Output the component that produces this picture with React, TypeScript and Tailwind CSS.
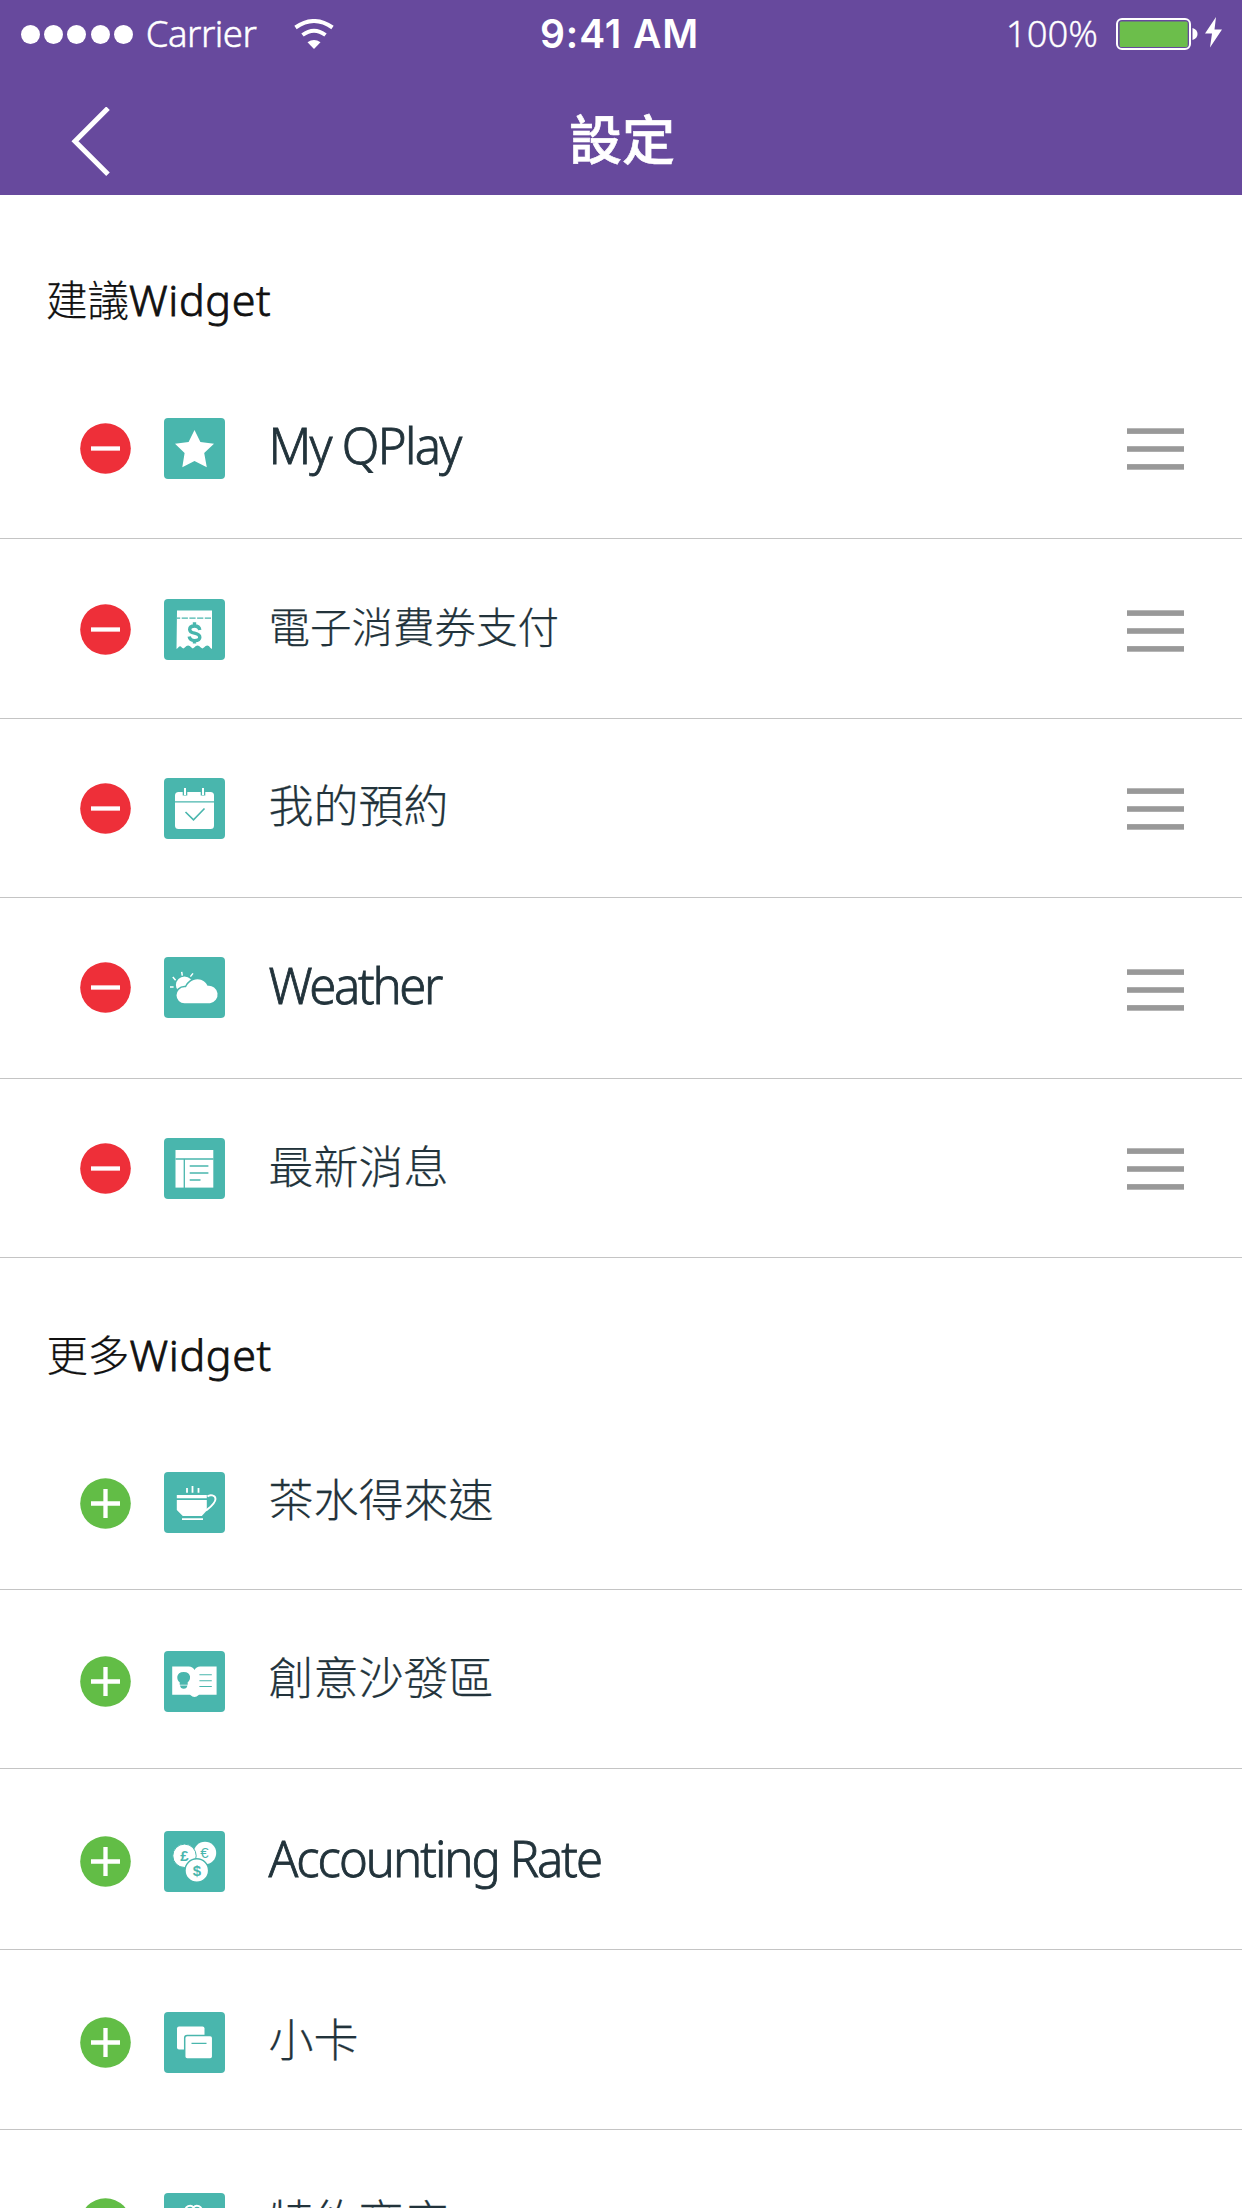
import React from "react";

const TEAL = "#49b6ad";

const icons: Record<string, React.ReactNode> = {
  star: (
    <path fill="#fff" d="M30.500 12l5.900 12 13.600 1.700-9.800 9.300 2.600 14.200-12.300-6.300-12.200 6.300 2.300-14.200-9.600-9.300 13.600-1.700z" />
  ),
  voucher: (
    <>
      <path fill="#fff" d="M13 11.500h35v38.500l-1.500-1q-3-4.500-6.500-.5l-1.600 1-1.600-1q-3.300-4-6.600 0l-1.400 1-1.400-1q-3.300-4-6.600 0l-1.500 1-1.500-1q-2-2.500-4 .5l-1.300 1z" />
      <path stroke={TEAL} strokeWidth="1.300" strokeDasharray="6.200 1.500" strokeDashoffset="3" d="M13 19.200h35" />
      <path fill="none" stroke={TEAL} strokeWidth="3.400" d="M35.800 31q-.6-4-5.300-4t-4.800 3.400q0 2.700 4.800 3.700 5.300 1.200 5.300 4.200 0 3.300-5.200 3.300-4.800 0-5.400-4M30.500 23.300v3.500M30.500 41v3.500" />
    </>
  ),
  calendar: (
    <>
      <rect x="11" y="14" width="39" height="37" rx="3.500" fill="#fff" />
      <path stroke={TEAL} strokeWidth="1.200" d="M11 23.800h39" />
      <path stroke={TEAL} strokeWidth="4.600" d="M21 13.500v4M39 13.500v4" />
      <path stroke="#fff" strokeWidth="2" d="M21 10v7M39 10v7" />
      <path fill="none" stroke={TEAL} strokeWidth="1.600" d="M21.500 34l8 7.800 11-11.300" />
    </>
  ),
  weather: (
    <>
      <circle cx="20.500" cy="28" r="8.600" fill="#fff" />
      <path stroke="#fff" strokeWidth="1.500" d="M6 30h3.600M8.800 20l2.800 3.200M17.700 14.800l.6 3.800M29 16.400l-2.600 3.200" />
      <path
        fill="#fff"
        stroke={TEAL}
        strokeWidth="3"
        paintOrder="stroke"
        d="M20.500 46.300a8 8 0 0 1 0-16h1.500c2-4 6-8 11.500-8 5 0 8.500 3 10 6.500a8.800 8.800 0 0 1 2.500 17.500z"
      />
    </>
  ),
  news: (
    <>
      <rect x="11.500" y="12" width="37.800" height="37.600" fill="#fff" />
      <path stroke={TEAL} strokeWidth="1.300" d="M11.500 21h38M20.300 21v29M25.700 28h18.700M25.700 35h18.700M25.700 42h10.800" />
    </>
  ),
  cup: (
    <>
      <path stroke="#fff" strokeWidth="1.800" d="M23 16v4.800M28.500 14v6.800M34.500 16v4.800" />
      <path fill="#fff" d="M12.800 23h30v3.200h-30zM12.800 28h30v10.500l-5 5.500h-19l-6-6zM18 46.300h21v1.700h-21z" />
      <path fill="none" stroke="#fff" strokeWidth="1.900" d="M43.500 24.500c2.500-2.300 8-1.500 8 2.500 0 4.500-5 8-9.500 11.500" />
      <path fill={TEAL} d="M44.500 27q2.500-2.500 4.500-.5 1 3.500-4.500 8.500z" />
    </>
  ),
  book: (
    <>
      <path fill="#fff" d="M8.200 15.500h16.600q4 0 5.700 3.500 1.700-3.500 5.700-3.500h16.400v28.200h-17.600q-2.500 2.200-4.500 2.200t-4.500-2.200h-17.800z" />
      <path fill={TEAL} d="M19.700 21c8 0 7.500 8 4 10.200v2.600h-8v-2.600c-3.500-2.200-4-10.200 4-10.200zM16 34.500h7.400q-.6 3.300-3.700 3.300t-3.700-3.300z" />
      <path stroke={TEAL} strokeWidth="1.100" d="M35.400 23.700h12.400M35.400 29.700h12.400M35.400 35.500h12.400" />
    </>
  ),
  coins: (
    <>
      <circle cx="41" cy="22" r="11.200" fill="#fff" />
      <circle cx="20.500" cy="24.800" r="11.700" fill="#fff" stroke={TEAL} />
      <circle cx="32.800" cy="39.500" r="11.800" fill="#fff" stroke={TEAL} strokeWidth="1.400" />
      <g fill={TEAL} fontFamily="Liberation Sans, sans-serif" fontWeight="bold" fontSize="15" textAnchor="middle">
        <text x="20.500" y="30">£</text>
        <text x="40.500" y="27.300" fontWeight="normal">€</text>
        <text x="32.800" y="45">$</text>
      </g>
    </>
  ),
  cards: (
    <>
      <rect x="13" y="14.500" width="27.500" height="23" rx="2" fill="#fff" />
      <rect x="20.700" y="23.600" width="28" height="23.300" rx="2.500" fill="#fff" stroke={TEAL} strokeWidth="1.500" />
      <path stroke={TEAL} strokeWidth="1.300" d="M27.500 31.300h15" />
    </>
  ),
  shop: (
    <>
      <path fill="none" stroke="#fff" strokeWidth="2" d="M21.500 18a4.500 4.500 0 0 1 8-3.500a4.500 4.500 0 0 1 8 3.500v7" />
      <path fill="#fff" d="M13 25h35v24h-35z" />
    </>
  ),
};

type Item = {
  icon: string;
  label: string;
  row: string;
  text: string;
  toggle?: string;
  tile?: string;
  handle?: string;
};

const suggested: Item[] = [
  { icon: "star", label: "My QPlay", row: "h-[180px] pb-px", text: "text-[49px] tracking-[-1.7px] pb-[6px] [-webkit-text-stroke:0.8px]", handle: "mt-[2px]" },
  { icon: "voucher", label: "電子消費券支付", row: "h-[180px] pt-[2px]", text: "text-[41.5px] pb-[4px] [-webkit-text-stroke:0.25px]", handle: "mt-[3px]" },
  { icon: "calendar", label: "我的預約", row: "h-[179px] pt-px", text: "text-[45px] pb-[6px] [-webkit-text-stroke:0.25px]" },
  { icon: "weather", label: "Weather", row: "h-[181px] pb-px", text: "text-[49px] tracking-[-2.3px] pb-[4px] [-webkit-text-stroke:0.8px]", tile: "mb-px", handle: "mt-[4px]" },
  { icon: "news", label: "最新消息", row: "h-[179px] pt-px", text: "text-[45px] pb-[5px] [-webkit-text-stroke:0.25px]", handle: "mt-px" },
];

const more: Item[] = [
  { icon: "cup", label: "茶水得來速", row: "h-[174px]", text: "text-[45px] pb-[6px] [-webkit-text-stroke:0.25px]", toggle: "mt-[2px]" },
  { icon: "book", label: "創意沙發區", row: "h-[179px] pt-[4px]", text: "text-[45px] pb-[7px] [-webkit-text-stroke:0.25px]" },
  { icon: "coins", label: "Accounting Rate", row: "h-[181px] pt-[5px]", text: "text-[49px] tracking-[-2px] pb-[6px] [-webkit-text-stroke:0.8px]" },
  { icon: "cards", label: "小卡", row: "h-[180px] pt-[5px]", text: "text-[45px] pb-[6px] [-webkit-text-stroke:0.25px]" },
  { icon: "shop", label: "特約商店", row: "h-[180px] pt-[8px]", text: "text-[45px] pb-[6px] [-webkit-text-stroke:0.25px]" },
];

function Toggle({ kind, className = "" }: { kind: "add" | "remove"; className?: string }) {
  return (
    <svg className={`size-[51px] shrink-0 ${className}`} viewBox="0 0 51 51">
      <circle cx="25.500" cy="25.500" r="25.300" fill={kind === "add" ? "#62bd46" : "#ee2f39"} />
      <path stroke="#fff" strokeWidth="4.300" d={kind === "add" ? "M11 25.500h29M25.500 11v29" : "M11 25.500h29"} />
    </svg>
  );
}

function Row({ item, kind }: { item: Item; kind: "add" | "remove" }) {
  return (
    <li className={`flex items-center border-b border-[#c4c4c4] pl-[80px] pr-[58px] ${item.row}`}>
      <Toggle kind={kind} className={item.toggle} />
      <svg className={`ml-[33px] size-[61px] shrink-0 rounded-[4px] bg-[#49b6ad] ${item.tile ?? ""}`} viewBox="0 0 61 61">
        {icons[item.icon]}
      </svg>
      <span className={`ml-[43.5px] whitespace-nowrap font-light leading-none ${item.text}`}>{item.label}</span>
      {kind === "remove" && (
        <svg className={`ml-auto h-[42px] w-[57px] ${item.handle ?? ""}`} viewBox="0 0 57 42" fill="#999">
          <rect y="0.300" width="57" height="5.600" />
          <rect y="18.200" width="57" height="5.600" />
          <rect y="36.100" width="57" height="5.600" />
        </svg>
      )}
    </li>
  );
}

function StatusBar() {
  return (
    <div className="grid h-[68px] grid-cols-[1fr_auto_1fr] items-center pl-[21px] pr-[19px]">
      <div className="flex items-center">
        <div className="flex gap-[4.2px]">
          {[0, 1, 2, 3, 4].map((n) => (
            <i key={n} className="size-[19px] rounded-full bg-white" />
          ))}
        </div>
        <span className="ml-[13px] w-[148px] pb-[2px] text-[36.5px] font-light leading-none tracking-[-0.5px] [-webkit-text-stroke:0.5px]">
          Carrier
        </span>
        <svg className="h-[30px] w-[40px]" viewBox="0 0 40 30">
          <path fill="none" stroke="#fff" strokeWidth="4" d="M1.500 8.500q18.500-13 37 0M8.500 16q11.500-8.500 23 0" />
          <path fill="#fff" d="M20 30l-6.500-6.800q6.500-4.600 13 0z" />
        </svg>
      </div>
      <span className="mr-[5px] pb-[2px] font-['Inter'] text-[39px] font-semibold leading-none tracking-[0.9px]">9:41 AM</span>
      <div className="flex items-center justify-end">
        <span className="pb-px text-[36.5px] font-light leading-none [-webkit-text-stroke:0.3px]">100%</span>
        <svg className="ml-[17px] h-[34px] w-[108px]" viewBox="0 0 108 34">
          <rect x="2" y="2" width="73" height="30" rx="5" fill="none" stroke="#fff" strokeWidth="2" />
          <rect x="4.700" y="4.500" width="68" height="25.500" rx="1.500" fill="#6cbe4b" />
          <path fill="#fff" d="M77.500 11q5 1.500 5 6t-5 6z" />
          <path fill="#fff" d="M101 0l-11 16.500h7l-2 14 12-18h-7.500z" />
        </svg>
      </div>
    </div>
  );
}

function Heading({ cjk, className }: { cjk: string; className: string }) {
  return (
    <h2 className={`text-[43px] font-light leading-[60px] text-[#111] ${className}`}>
      <span className="text-[41.5px] [-webkit-text-stroke:0.25px]">{cjk}</span>
      <span className="tracking-[0.6px] [-webkit-text-stroke:0.8px]">Widget</span>
    </h2>
  );
}

export default function App() {
  return (
    <div className="h-[2208px] w-[1242px] overflow-hidden bg-white font-['Noto_Sans','Noto_Sans_CJK_TC',sans-serif] text-[#22333b]">
      <header className="h-[195px] bg-[#67499d] text-white">
        <StatusBar />
        <div className="grid h-[127px] grid-cols-[1fr_auto_1fr] pl-[70px] pr-[68px] pt-[39px]">
          <svg className="h-[70px] w-[40px]" viewBox="0 0 40 70">
            <path fill="none" stroke="#fff" strokeWidth="5" d="M38 1.200l-33 33 33 33" />
          </svg>
          <h1 className="pt-[6px] text-[53px] font-medium leading-none [-webkit-text-stroke:0.6px]">設定</h1>
        </div>
      </header>
      <Heading cjk="建議" className="mt-[75px] pl-[46px]" />
      <ul className="mt-[29px]">
        {suggested.map((item) => (
          <Row key={item.label} item={item} kind="remove" />
        ))}
      </ul>
      <Heading cjk="更多" className="mt-[67px] pl-[46.5px]" />
      <ul className="mt-[31px]">
        {more.map((item) => (
          <Row key={item.label} item={item} kind="add" />
        ))}
      </ul>
    </div>
  );
}
